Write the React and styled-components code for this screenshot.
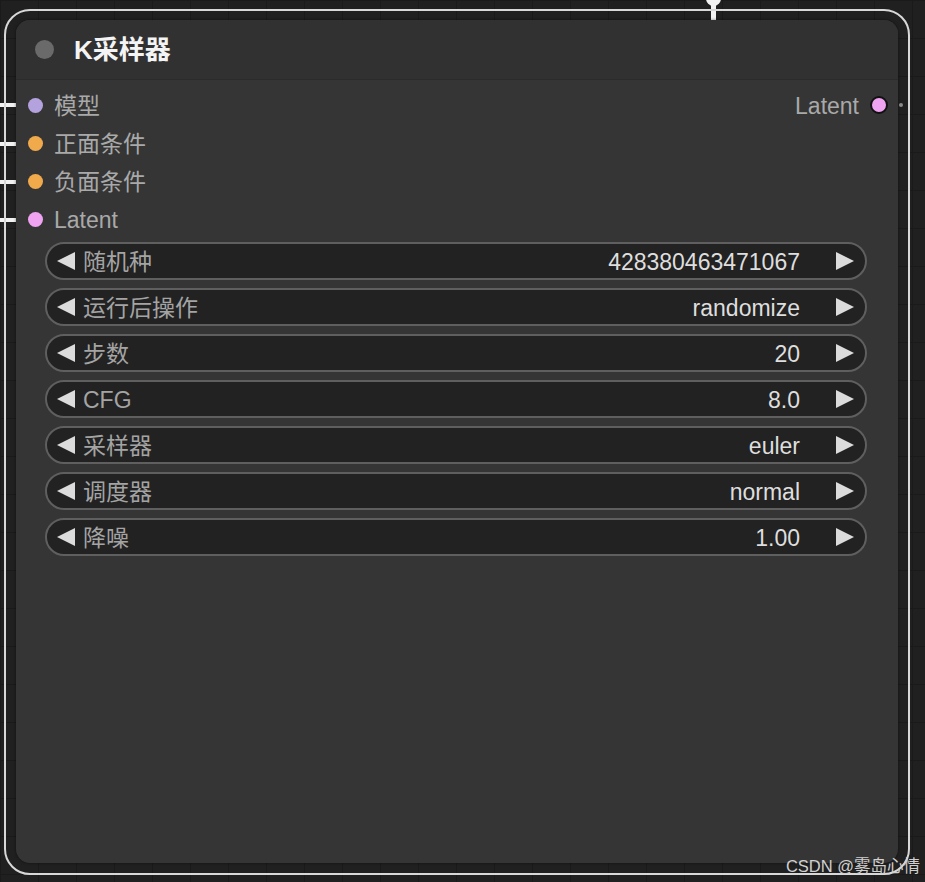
import React from "react";
import styled, { createGlobalStyle } from "styled-components";

const Global = createGlobalStyle`
  html, body { margin: 0; padding: 0; background: #202020; }
  body { font-family: "Liberation Sans", "Noto Sans CJK SC", Arial, sans-serif; }
  * { box-sizing: border-box; }
`;

const FONT = `"Liberation Sans", "Noto Sans CJK SC", Arial, sans-serif`;

const Canvas = styled.div`
  position: relative;
  width: 925px;
  height: 882px;
  overflow: hidden;
  background-color: #202020;
  background-image:
    linear-gradient(#1a1a1a 1px, transparent 1px),
    linear-gradient(90deg, #1a1a1a 1px, transparent 1px);
  background-size: 38px 38px;
  background-position: 0 0;
`;

const Selection = styled.div`
  position: absolute;
  left: 4px;
  top: 9px;
  width: 906px;
  height: 866px;
  border: 2px solid #d8d8d8;
  border-radius: 26px;
`;

const Wire = styled.div`
  position: absolute;
  background: #f2f2f2;
`;

const HWire = styled(Wire)`
  left: 0;
  width: 18px;
  height: 4px;
  top: ${(p) => p.$y - 2}px;
`;

const TopWire = styled(Wire)`
  left: 711px;
  top: 0;
  width: 5px;
  height: 21px;
  &::before {
    content: "";
    position: absolute;
    left: -5px;
    top: -9px;
    width: 15px;
    height: 15px;
    border-radius: 50%;
    background: #f2f2f2;
  }
`;

const Node = styled.div`
  position: absolute;
  left: 16px;
  top: 20px;
  width: 882px;
  height: 843px;
  background: #353535;
  border-radius: 14px;
  box-shadow: 0 0 3px rgba(0, 0, 0, 0.5);
  font-family: ${FONT};
`;

const TitleBar = styled.div`
  height: 60px;
  display: flex;
  align-items: center;
  gap: 20px;
  padding-left: 19px;
  background: #313131;
  border-radius: 14px 14px 0 0;
  border-bottom: 1px solid #2b2b2b;
`;

const TitleDot = styled.span`
  width: 19px;
  height: 19px;
  border-radius: 50%;
  background: #6a6a6a;
`;

const Title = styled.span`
  color: #f4f4f4;
  font-size: 26px;
  line-height: 1;
  font-weight: 600;
`;

const Slots = styled.div`
  display: grid;
  grid-template-columns: 1fr auto;
  padding: 6px 10px 0 12px;
`;

const SlotCol = styled.div`
  display: flex;
  flex-direction: column;
  align-items: ${(p) => (p.$right ? "flex-end" : "flex-start")};
`;

const SlotRow = styled.div`
  height: 38px;
  display: flex;
  align-items: center;
  gap: 11px;
  color: #a9a9a9;
  font-size: 23px;
  line-height: 1;
  position: relative;
`;

const SlotText = styled.span`
  padding-top: 3px;
`;

const Dot = styled.span`
  width: ${(p) => (p.$outlined ? 18 : 15)}px;
  height: ${(p) => (p.$outlined ? 18 : 15)}px;
  border-radius: 50%;
  background: ${(p) => p.$color};
  border: ${(p) => (p.$outlined ? "2px solid #111" : "none")};
  flex: none;
`;

const SideDot = styled.span`
  position: absolute;
  right: -15px;
  top: 17px;
  width: 4px;
  height: 4px;
  border-radius: 50%;
  background: #8a8a8a;
`;

const Widgets = styled.div`
  display: flex;
  flex-direction: column;
  gap: 8px;
  padding: 4px 31px 0 29px;
`;

const Widget = styled.div`
  height: 38px;
  display: flex;
  align-items: center;
  padding: 0 10px 0 9px;
  background: #222222;
  border: 2px solid #5f5f5f;
  border-radius: 19px;
  font-size: 23px;
  line-height: 1;
`;

const Arrow = styled.svg`
  width: 20px;
  height: 20px;
  flex: none;
  fill: #dcdcdc;
`;

const Label = styled.span`
  color: #a4a4a4;
  margin-left: 7px;
  padding-top: 3px;
  flex: 1;
  white-space: nowrap;
`;

const Value = styled.span`
  color: #dedede;
  margin-right: 35px;
  padding-top: 3px;
  white-space: nowrap;
`;

const Watermark = styled.div`
  position: absolute;
  right: 5px;
  bottom: 8px;
  font-family: ${FONT};
  font-size: 16.5px;
  line-height: 1;
  color: #d0d0d0;
`;

const LeftArrow = () => (
  <Arrow viewBox="0 0 20 20">
    <polygon points="1,10 19,1 19,19" />
  </Arrow>
);
const RightArrow = () => (
  <Arrow viewBox="0 0 20 20">
    <polygon points="19,10 1,1 1,19" />
  </Arrow>
);

const inputs = [
  { label: "模型", color: "#b3a2dd" },
  { label: "正面条件", color: "#f0aa4c" },
  { label: "负面条件", color: "#f0aa4c" },
  { label: "Latent", color: "#f0a3f0" },
];

const widgets = [
  ["随机种", "428380463471067"],
  ["运行后操作", "randomize"],
  ["步数", "20"],
  ["CFG", "8.0"],
  ["采样器", "euler"],
  ["调度器", "normal"],
  ["降噪", "1.00"],
];

export default function App() {
  return (
    <Canvas>
      <Global />
      <TopWire />
      {[105, 144, 182, 220].map((y) => (
        <HWire key={y} $y={y} />
      ))}
      <Selection />
      <Node>
        <TitleBar>
          <TitleDot />
          <Title>K采样器</Title>
        </TitleBar>
        <Slots>
          <SlotCol>
            {inputs.map((s) => (
              <SlotRow key={s.label}>
                <Dot $color={s.color} />
                <SlotText>{s.label}</SlotText>
              </SlotRow>
            ))}
          </SlotCol>
          <SlotCol $right>
            <SlotRow>
              <SlotText>Latent</SlotText>
              <Dot $color="#f0a3f0" $outlined />
              <SideDot />
            </SlotRow>
          </SlotCol>
        </Slots>
        <Widgets>
          {widgets.map(([l, v]) => (
            <Widget key={l}>
              <LeftArrow />
              <Label>{l}</Label>
              <Value>{v}</Value>
              <RightArrow />
            </Widget>
          ))}
        </Widgets>
      </Node>
      <Watermark>CSDN @雾岛心情</Watermark>
    </Canvas>
  );
}
